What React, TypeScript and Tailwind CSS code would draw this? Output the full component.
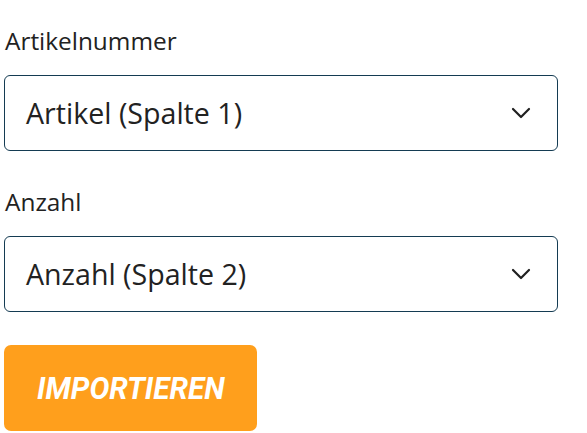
const fields = [
  { label: "Artikelnummer", value: "Artikel (Spalte 1)" },
  { label: "Anzahl", value: "Anzahl (Spalte 2)" },
];

function Chevron() {
  return (
    <svg width="20" height="12" viewBox="0 0 20 12" fill="none">
      <path d="M2 2l8 8 8-8" stroke="#1f1f1f" strokeWidth="2.2" strokeLinecap="round" strokeLinejoin="round" />
    </svg>
  );
}

export default function App() {
  return (
    <div className="min-h-screen bg-white px-[4px] pt-[25px] font-['Open_Sans',sans-serif] text-[#222]">
      <div className="w-[554px]">
        {fields.map((field, i) => (
          <div key={field.label} className={i > 0 ? "mt-[35px]" : ""}>
            <label className="block pl-[1px] text-[24.4px] leading-[32px]">{field.label}</label>
            <div className="mt-[18px] flex h-[76px] items-center justify-between rounded-[6px] border-[1.5px] border-[#143b52] pl-[21px] pr-[26px]">
              <span className="text-[28.6px] leading-none">{field.value}</span>
              <Chevron />
            </div>
          </div>
        ))}

        <button className="mt-[33px] flex h-[86px] w-[253px] items-center justify-center rounded-[7px] bg-[#ff9f1c]">
          <span className="inline-block scale-x-[0.93] font-['Roboto',sans-serif] text-[32px] font-bold italic leading-none text-white">
            IMPORTIEREN
          </span>
        </button>
      </div>
    </div>
  );
}
